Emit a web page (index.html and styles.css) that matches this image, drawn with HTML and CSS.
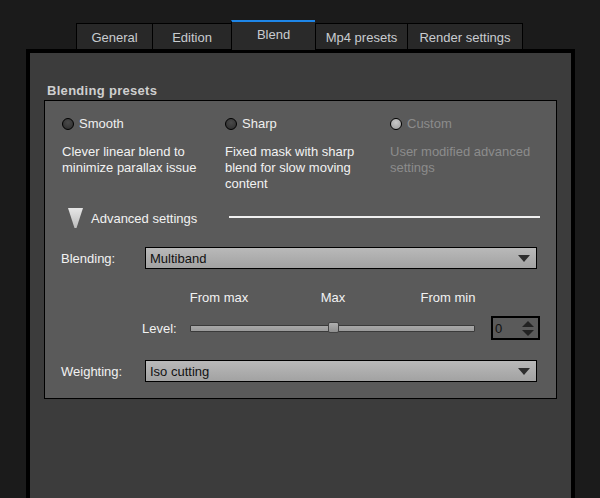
FILE: index.html
```html
<!DOCTYPE html>
<html>
<head>
<meta charset="utf-8">
<link rel="stylesheet" href="styles.css">
</head>
<body>
<div class="window">
  <div class="tabs">
    <div class="tab w-general">General</div>
    <div class="tab w-edition">Edition</div>
    <div class="tab active w-blend">Blend</div>
    <div class="tab w-mp4">Mp4 presets</div>
    <div class="tab last w-render">Render settings</div>
  </div>
  <div class="panel">
    <div class="group-title">Blending presets</div>
    <div class="group">
      <div class="presets">
        <div class="preset">
          <div class="radio-row"><span class="radio"></span><span>Smooth</span></div>
          <div class="desc">Clever linear blend to<br>minimize parallax issue</div>
        </div>
        <div class="preset">
          <div class="radio-row"><span class="radio"></span><span>Sharp</span></div>
          <div class="desc">Fixed mask with sharp<br>blend for slow moving<br>content</div>
        </div>
        <div class="preset disabled">
          <div class="radio-row"><span class="radio light"></span><span>Custom</span></div>
          <div class="desc">User modified advanced<br>settings</div>
        </div>
      </div>

      <div class="advanced">
        <svg class="disclosure" width="17" height="21" viewBox="0 0 17 21">
          <defs>
            <linearGradient id="tg" x1="0" y1="0" x2="0" y2="1">
              <stop offset="0" stop-color="#e6e6e6"/>
              <stop offset="1" stop-color="#bdbdbd"/>
            </linearGradient>
          </defs>
          <polygon points="1,0 16,0 9.5,20 7.5,20" fill="url(#tg)"/>
        </svg>
        <span class="adv-label">Advanced settings</span>
        <span class="adv-line"></span>
      </div>

      <div class="field-row">
        <span class="field-label">Blending:</span>
        <div class="select"><span>Multiband</span><span class="caret"></span></div>
      </div>

      <div class="scale-labels">
        <span class="sl sl-a">From max</span>
        <span class="sl sl-b">Max</span>
        <span class="sl sl-c">From min</span>
      </div>

      <div class="level-row">
        <span class="level-label">Level:</span>
        <div class="slider">
          <div class="track"></div>
          <div class="thumb"></div>
        </div>
        <div class="spin">
          <span class="spin-val">0</span>
          <span class="spin-arrows"><span class="up"></span><span class="down"></span></span>
        </div>
      </div>

      <div class="field-row weighting">
        <span class="field-label">Weighting:</span>
        <div class="select"><span>Iso cutting</span><span class="caret"></span></div>
      </div>
    </div>
  </div>
</div>
</body>
</html>
```

FILE: styles.css
```css
html, body {
  margin: 0;
  padding: 0;
  background: #1b1b1b;
  height: 100%;
  overflow: hidden;
}

body {
  font-family: "Liberation Sans", Arial, sans-serif;
  font-size: 13px;
  color: #efefef;
}

.window {
  height: 498px;
  display: flex;
  flex-direction: column;
  padding-top: 20px;
  box-sizing: border-box;
}

.tabs {
  display: flex;
  align-items: flex-end;
  margin-left: 76px;
  height: 29px;
}

.tab {
  height: 26px;
  box-sizing: border-box;
  background: #282828;
  border: 1px solid #000;
  border-right: none;
  border-bottom: none;
  color: #c9ccd0;
  font-size: 13px;
  display: flex;
  align-items: center;
  justify-content: center;
  padding-top: 1px;
}

.tab.last {
  border-right: 1px solid #000;
}

.tab.active {
  height: 30px;
  margin-bottom: -1px;
  border-top: 2px solid #1e86e8;
  background: #2a2a2a;
  padding-top: 0;
  padding-bottom: 4px;
  position: relative;
  z-index: 1;
}

.w-general { width: 76px; }
.w-edition { width: 79px; }
.w-blend { width: 84px; }
.w-mp4 { width: 92px; }
.w-render { width: 116px; }

.panel {
  margin-left: 26px;
  width: 549px;
  flex: 1;
  box-sizing: border-box;
  border: 4px solid #000;
  border-bottom: none;
  background: #3c3c3c;
  padding: 30px 0 0 14px;
}

.group-title {
  font-weight: bold;
  color: #cfcfcf;
  font-size: 13px;
  line-height: 16px;
  margin-left: 3px;
  letter-spacing: 0.3px;
  margin-bottom: 1px;
}

.group {
  width: 513px;
  height: 299px;
  box-sizing: border-box;
  border: 1px solid #000;
  background: #5a5a5a;
  padding-top: 15px;
}

.presets {
  display: grid;
  grid-template-columns: 163px 165px 1fr;
  padding-left: 17px;
}

.radio-row {
  display: flex;
  align-items: center;
  gap: 5px;
  height: 16px;
  line-height: 16px;
}

.radio {
  width: 10px;
  height: 10px;
  border-radius: 50%;
  border: 1px solid #000;
  background: radial-gradient(circle at 50% 35%, #4a4a4a, #2c2c2c);
}

.radio.light {
  background: radial-gradient(circle at 50% 35%, #c8c8c8, #9a9a9a);
}

.desc {
  margin-top: 12px;
  line-height: 16px;
  color: #f2f2f2;
}

.disabled {
  color: #8c8c8c;
}

.disabled .desc {
  color: #8c8c8c;
}

.advanced {
  display: flex;
  align-items: center;
  height: 21px;
  margin-top: 16px;
  padding-left: 22px;
}

.disclosure {
  display: block;
}

.adv-label {
  margin-left: 7px;
  color: #f2f2f2;
}

.adv-line {
  height: 2px;
  background: #f0f0f0;
  width: 311px;
  margin-left: auto;
  margin-right: 16px;
  margin-top: -4px;
}

.field-row {
  display: flex;
  align-items: center;
  margin-top: 18px;
  padding-left: 16px;
}

.field-label {
  width: 84px;
  color: #f2f2f2;
}

.select {
  width: 392px;
  height: 22px;
  box-sizing: border-box;
  border: 1px solid #000;
  background: linear-gradient(#b9b9b9, #a2a2a2);
  color: #111;
  display: flex;
  align-items: center;
  justify-content: space-between;
  padding: 0 6px 0 4px;
}

.caret {
  width: 0;
  height: 0;
  border-left: 6px solid transparent;
  border-right: 6px solid transparent;
  border-top: 7px solid #2e2e2e;
}

.scale-labels {
  position: relative;
  height: 16px;
  margin-top: 21px;
}

.sl {
  position: absolute;
  top: 0;
  line-height: 16px;
  transform: translateX(-50%);
  color: #f2f2f2;
}

.sl-a { left: 174px; }
.sl-b { left: 288px; }
.sl-c { left: 403px; }

.level-row {
  display: flex;
  align-items: center;
  height: 24px;
  margin-top: 10px;
}

.level-label {
  margin-left: 97px;
  width: 48px;
  color: #f2f2f2;
}

.slider {
  position: relative;
  width: 285px;
  height: 14px;
  display: flex;
  align-items: center;
}

.track {
  width: 100%;
  height: 7px;
  box-sizing: border-box;
  border: 1px solid #3a3a3a;
  border-radius: 1px;
  background: linear-gradient(#a8a8a8, #9a9a9a);
}

.thumb {
  position: absolute;
  left: 138px;
  top: 1px;
  width: 11px;
  height: 11px;
  box-sizing: border-box;
  border: 1px solid #444;
  border-radius: 2px;
  background: linear-gradient(#b0b0b0, #8e8e8e);
}

.spin {
  margin-left: 16px;
  width: 49px;
  height: 24px;
  box-sizing: border-box;
  border: 2px solid #000;
  background: #5a5a5a;
  display: flex;
  align-items: center;
  justify-content: space-between;
  padding: 0 4px 0 2px;
}

.spin-val {
  color: #111;
  font-size: 13px;
}

.spin-arrows {
  display: flex;
  flex-direction: column;
  gap: 3px;
}

.up, .down {
  width: 0;
  height: 0;
  border-left: 6px solid transparent;
  border-right: 6px solid transparent;
}

.up { border-bottom: 6px solid #222; }
.down { border-top: 6px solid #222; }

.weighting {
  margin-top: 20px;
}
```
